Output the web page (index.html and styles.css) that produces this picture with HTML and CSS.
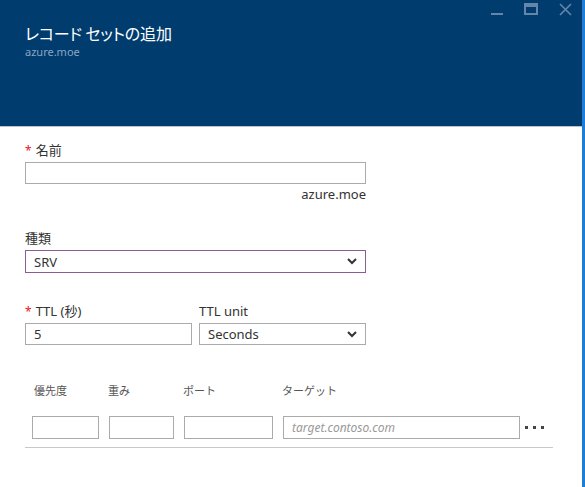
FILE: index.html
```html
<!DOCTYPE html>
<html lang="ja">
<head>
<meta charset="utf-8">
<link rel="stylesheet" href="styles.css">
</head>
<body>
<div class="app">
  <div class="blade">
    <header class="head">
      <div class="titles">
        <div class="title">レコード セットの追加</div>
        <div class="subtitle">azure.moe</div>
      </div>
      <div class="controls">
        <svg class="ctl" width="13" height="13" viewBox="0 0 13 13"><rect x="0" y="10" width="12" height="2" fill="currentColor"/></svg>
        <svg class="ctl" width="15" height="13" viewBox="0 0 15 13"><rect x="1" y="1" width="12" height="10" fill="none" stroke="currentColor" stroke-width="2"/><rect x="1" y="1" width="12" height="3" fill="currentColor"/></svg>
        <svg class="ctl" width="13" height="13" viewBox="0 0 13 13"><path d="M1 1 L12 12 M12 1 L1 12" stroke="currentColor" stroke-width="1.6" fill="none"/></svg>
      </div>
    </header>
    <main class="form">
      <div class="field">
        <label class="lbl"><span class="req">*</span>名前</label>
        <div class="input wide"></div>
        <div class="suffix">azure.moe</div>
      </div>
      <div class="field type">
        <label class="lbl">種類</label>
        <div class="select wide focus"><span>SRV</span><svg class="chev" width="10" height="7" viewBox="0 0 10 7"><path d="M1 1 L5 5 L9 1" stroke="#333" stroke-width="2" fill="none"/></svg></div>
      </div>
      <div class="ttl-row">
        <div class="col">
          <label class="lbl"><span class="req">*</span>TTL (秒)</label>
          <div class="input half"><span>5</span></div>
        </div>
        <div class="col">
          <label class="lbl">TTL unit</label>
          <div class="select half"><span>Seconds</span><svg class="chev" width="10" height="7" viewBox="0 0 10 7"><path d="M1 1 L5 5 L9 1" stroke="#333" stroke-width="2" fill="none"/></svg></div>
        </div>
      </div>
      <div class="grid">
        <div class="ghead">
          <span class="c1">優先度</span>
          <span class="c2">重み</span>
          <span class="c3">ポート</span>
          <span class="c4">ターゲット</span>
        </div>
        <div class="grow">
          <div class="input c1"></div>
          <div class="input c2"></div>
          <div class="input c3"></div>
          <div class="input c4 ph"><span>target.contoso.com</span></div>
          <div class="more"><i></i><i></i><i></i></div>
        </div>
      </div>
    </main>
  </div>
  <div class="stripe"></div>
</div>
</body>
</html>
```
FILE: styles.css
```css
html, body {
  margin: 0;
  padding: 0;
  width: 585px;
  height: 487px;
  overflow: hidden;
  background: #fff;
  font-family: "Noto Sans", "Noto Sans CJK JP", sans-serif;
  color: #333;
}
.app {
  display: flex;
  height: 487px;
}
.blade {
  width: 582px;
  display: flex;
  flex-direction: column;
}
.stripe {
  width: 3px;
  background: #1c7ed6;
}
.head {
  height: 127px;
  box-sizing: border-box;
  background: #003c6e;
  border-bottom: 1px solid #b9c3cc;
  display: flex;
  justify-content: space-between;
  align-items: flex-start;
  padding: 0 10px 0 25px;
}
.titles {
  padding-top: 22px;
}
.title {
  color: #fff;
  font-family: "Noto Sans CJK JP", sans-serif;
  font-size: 16px;
  line-height: 22px;
  font-feature-settings: "palt";
  letter-spacing: -0.2px;
}
.subtitle {
  color: #8aa5c3;
  font-size: 11px;
  line-height: 16px;
  margin-top: 0;
}
.controls {
  display: flex;
  align-items: flex-start;
  gap: 20px;
  padding-top: 3px;
  color: #6486ab;
}
.ctl { display: block; }
.form {
  padding: 14px 0 0 25px;
  font-size: 13px;
}
.lbl {
  display: block;
  line-height: 18px;
  height: 18px;
  margin-bottom: 3px;
  font-family: "Noto Sans", "Noto Sans CJK JP", sans-serif;
}
.req {
  color: #e0201d;
  margin-right: 4px;
  font-size: 12px;
}
.input, .select {
  box-sizing: border-box;
  height: 22px;
  border: 1px solid #ababab;
  background: #fff;
  display: flex;
  align-items: center;
  padding: 0 8px;
  line-height: 20px;
}
.wide { width: 341px; }
.half { width: 167px; }
.select {
  justify-content: space-between;
  padding-right: 8px;
}
.select.focus {
  border-color: #8c5a95;
  height: 23px;
}
.chev { display: block; }
.suffix {
  width: 341px;
  text-align: right;
  line-height: 18px;
  margin-top: 1px;
}
.type {
  margin-top: 26px;
}
.ttl-row {
  display: flex;
  gap: 7px;
  margin-top: 29px;
}
.grid {
  margin-top: 37px;
  width: 528px;
}
.ghead {
  display: flex;
  font-size: 11px;
  color: #555;
  line-height: 16px;
  font-family: "Noto Sans CJK JP", sans-serif;
  padding-left: 9px;
  gap: 10px;
}
.ghead span { display: block; }
.grow {
  display: flex;
  align-items: center;
  gap: 10px;
  margin-top: 18px;
  padding: 0 0 8px 7px;
  border-bottom: 1px solid #c8c8c8;
}
.ghead .c1 { width: 64px; }
.ghead .c2 { width: 65px; }
.ghead .c3 { width: 89px; }
.grow .input.c1 { width: 67px; }
.grow .input.c2 { width: 65px; }
.grow .input.c3 { width: 89px; }
.grow .input.c4 { width: 237px; }
.grow .input { height: 23px; }
.ph span {
  color: #999;
  font-style: italic;
  font-size: 12px;
}
.more {
  display: flex;
  gap: 5px;
  margin-left: -5px;
}
.more i {
  display: block;
  width: 3px;
  height: 3px;
  background: #444;
}
```
